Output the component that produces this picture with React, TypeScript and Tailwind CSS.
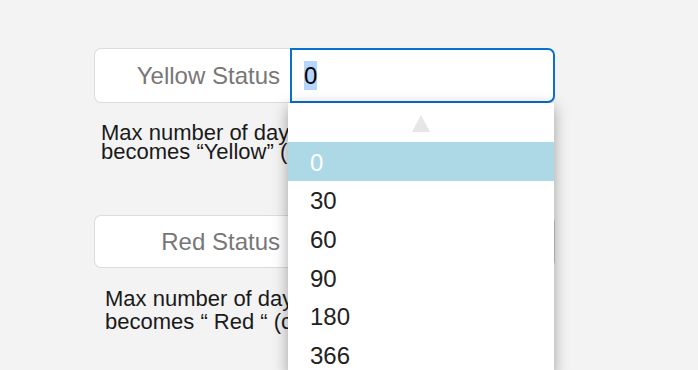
import React from 'react';

const options = ['0', '30', '60', '90', '180', '366'];

const App: React.FC = () => {
  return (
    <div
      className="relative w-[698px] h-[370px] overflow-hidden bg-[#f3f3f3] text-[#222]"
      style={{ fontFamily: '"Liberation Sans", Arial, sans-serif' }}
    >
      <div className="pl-[94px] pt-[48px]">
        {/* Yellow row */}
        <div className="flex h-[55px] w-[461px]">
          <div className="flex w-[196px] items-center justify-end rounded-l-[7px] border-[1.5px] border-r-0 border-[#dcdcdc] bg-white pr-[10px] text-[24px] text-[#777]">
            Yellow Status
          </div>
          <div className="flex flex-1 items-center rounded-r-[7px] border-2 border-[#0a6fd0] bg-white pl-[12px] text-[24px] text-black">
            <span className="bg-[#b4d5fc] leading-[29px]">0</span>
          </div>
        </div>
        <p className="mt-[20px] pl-[7px] text-[22px] leading-[19px] text-[#1a1a1a]">
          Max number of days before status
          <br />
          becomes “Yellow” (counted from)
        </p>

        {/* Red row */}
        <div className="mt-[54px] flex h-[53px] w-[461px]">
          <div className="flex w-[196px] items-center justify-end rounded-l-[7px] border-[1.5px] border-r-0 border-[#dcdcdc] bg-white pr-[10px] text-[24px] text-[#777]">
            Red Status
          </div>
          <div className="flex flex-1 items-center rounded-r-[7px] border-[1.5px] border-[#c8c8c8] bg-white pl-[12px] text-[24px] text-black">
            0
          </div>
        </div>
        <p className="mt-[19px] pl-[11px] text-[22px] leading-[23px] text-[#1a1a1a]">
          Max number of days before status
          <br />
          becomes “ Red “ (counted from)
        </p>
      </div>

      {/* Open dropdown list */}
      <div className="absolute left-[288px] top-[103px] w-[266px] bg-white shadow-[0_4px_14px_rgba(0,0,0,0.35)]">
        <div className="flex h-[39px] items-center justify-center">
          <svg width="20" height="18" viewBox="0 0 20 18">
            <polygon points="10,1 19,18 1,18" fill="#e6e6e6" />
          </svg>
        </div>
        {options.map((o, i) => (
          <div
            key={o}
            className={
              i === 0
                ? 'flex h-[38.6px] items-center bg-[#add8e6] pl-[22px] pt-[3px] text-[24px] text-white'
                : 'flex h-[38.6px] items-center pl-[22px] pt-[3px] text-[24px] text-[#222]'
            }
          >
            {o}
          </div>
        ))}
      </div>
    </div>
  );
};

export default App;
